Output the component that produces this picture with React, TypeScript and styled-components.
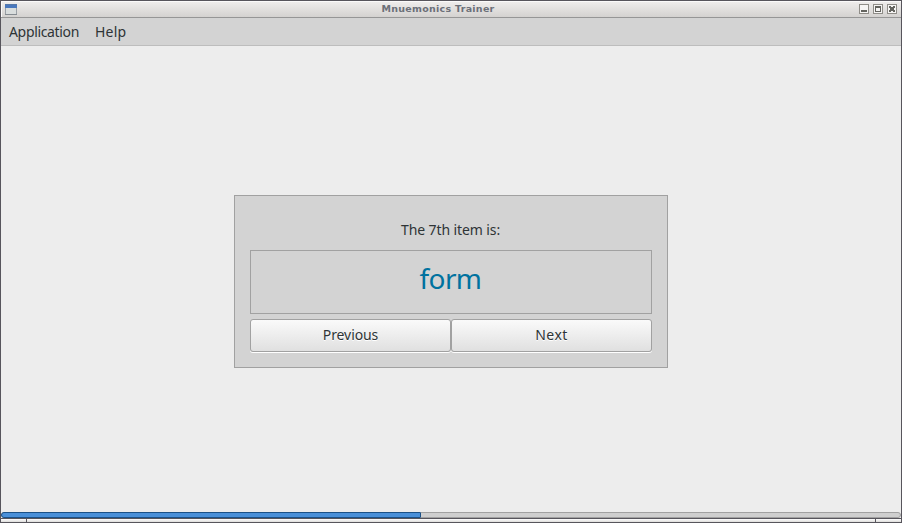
import React from "react";
import styled, { createGlobalStyle } from "styled-components";

const GlobalStyle = createGlobalStyle`
  * { box-sizing: border-box; }
  body { margin: 0; overflow: hidden; }
`;

const Window = styled.div`
  width: 902px;
  height: 523px;
  display: flex;
  flex-direction: column;
  border: 1px solid #57555c;
  background: #ededed;
  color: #2e3436;
  font: 14px/20px "Noto Sans", sans-serif;
`;

const TitleBar = styled.header`
  height: 17px;
  flex: none;
  display: grid;
  grid-template-columns: 44px 1fr 44px;
  align-items: center;
  padding: 0 4px;
  background: linear-gradient(#f0eeed, #d4d2d0);
  border-bottom: 1px solid #969696;
  box-shadow: inset 1px 1px #fbfafa;
`;

const Title = styled.h1`
  margin: 0;
  padding-right: 26px;
  text-align: center;
  color: #6c7079;
  font: bold 9.5px/14px "DejaVu Sans", sans-serif;
  letter-spacing: 0.28px;
`;

const Controls = styled.div`
  display: flex;
  gap: 4px;
  justify-content: flex-end;
  svg { display: block; }
`;

const MenuBar = styled.nav`
  height: 28px;
  flex: none;
  display: flex;
  align-items: center;
  gap: 16px;
  padding: 0 8px;
  background: #d3d3d3;
  border-bottom: 1px solid #bdbdbd;
`;

const Label = styled.span<{ $spacing?: number }>`
  letter-spacing: ${({ $spacing = 0 }) => $spacing}px;
  white-space: nowrap;
`;

const Content = styled.main`
  flex: 1;
  display: flex;
  justify-content: center;
  align-items: flex-start;
  padding-top: 149px;
`;

const Card = styled.section`
  width: 434px;
  height: 173px;
  padding: 24px 15px 15px;
  border: 1px solid #a1a1a1;
  background: #d3d3d3;
`;

const Prompt = styled.div`
  height: 30px;
  padding-right: 1px;
  text-align: center;
`;

const Answer = styled.div`
  height: 64px;
  margin-bottom: 5px;
  padding-right: 1px;
  border: 1px solid #a1a1a1;
  color: #00729f;
  text-align: center;
  font-size: 28px;
  line-height: 54px;
`;

const Actions = styled.div`
  display: flex;
`;

const Button = styled.button`
  flex: 1;
  height: 33px;
  padding: 0 0 2px;
  border: 1px solid #a1a1a1;
  border-radius: 3px;
  background: linear-gradient(#fafafa, #e0e0e0);
  box-shadow: 0 1px #fff;
  color: inherit;
  font: inherit;
  text-shadow: 0 1px #fff;
`;

const ProgressTrack = styled.div`
  height: 6px;
  flex: none;
  border: 1px solid #a1a1a1;
  border-radius: 3px;
  background: #cfcfcf;
`;

const ProgressFill = styled.div`
  height: 6px;
  width: 420px;
  margin: -1px;
  border: 1px solid #1c5187;
  border-radius: 3px 1px 1px 3px;
  background: #4a90d9;
`;

const ResizeFrame = styled.footer`
  height: 4px;
  flex: none;
  display: grid;
  grid-template-columns: 26px 1fr 26px;
  border-top: 1px solid #57555c;
  background: linear-gradient(#fff, #dddcda);
`;

const ResizeGrip = styled.div`
  &:first-child { border-right: 1px solid #57555c; }
  &:last-child { border-left: 1px solid #57555c; }
`;

const controlShapes = {
  minimize: <rect x="2" y="6" width="6" height="2" fill="#64645f" />,
  maximize: <path d="M2 2H8V8H2Z M3 4V7H7V4Z" fill="#64645f" fillRule="evenodd" />,
  close: <path d="M2 2H4V3H6V2H8V4H7V6H8V8H6V7H4V8H2V6H3V4H2Z" fill="#64645f" />,
};

function ControlIcon({ kind }: { kind: keyof typeof controlShapes }) {
  return (
    <svg width="10" height="10" shapeRendering="crispEdges" role="img" aria-label={kind}>
      <rect x=".5" y=".5" width="9" height="9" fill="#f6f5f4" stroke="#8f8d88" />
      {controlShapes[kind]}
    </svg>
  );
}

export default function App() {
  return (
    <>
      <GlobalStyle />
      <Window>
        <TitleBar>
          <svg width="12" height="11" shapeRendering="crispEdges" aria-hidden="true">
            <rect x=".5" y=".5" width="11" height="10" fill="#d9dddd" stroke="#9aa0a6" />
            <rect width="12" height="4" fill="#4a78bd" />
            <path d="M0 .5H12" stroke="#5779a9" />
            <path d="M0 10.5H12" stroke="#858b91" />
          </svg>
          <Title>Mnuemonics Trainer</Title>
          <Controls>
            <ControlIcon kind="minimize" />
            <ControlIcon kind="maximize" />
            <ControlIcon kind="close" />
          </Controls>
        </TitleBar>
        <MenuBar>
          <Label $spacing={-0.34}>Application</Label>
          <Label $spacing={0.2}>Help</Label>
        </MenuBar>
        <Content>
          <Card>
            <Prompt><Label $spacing={-0.1}>The 7th item is:</Label></Prompt>
            <Answer><Label $spacing={-0.6}>form</Label></Answer>
            <Actions>
              <Button><Label $spacing={-0.1}>Previous</Label></Button>
              <Button><Label $spacing={0.4}>Next</Label></Button>
            </Actions>
          </Card>
        </Content>
        <ProgressTrack><ProgressFill /></ProgressTrack>
        <ResizeFrame><ResizeGrip /><div /><ResizeGrip /></ResizeFrame>
      </Window>
    </>
  );
}
